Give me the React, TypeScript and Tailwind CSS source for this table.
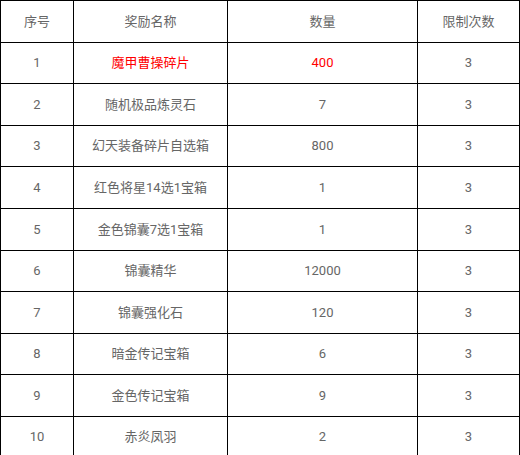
import React from "react";

const rows: [string, string, string, string, boolean][] = [
  ["1", "魔甲曹操碎片", "400", "3", true],
  ["2", "随机极品炼灵石", "7", "3", false],
  ["3", "幻天装备碎片自选箱", "800", "3", false],
  ["4", "红色将星14选1宝箱", "1", "3", false],
  ["5", "金色锦囊7选1宝箱", "1", "3", false],
  ["6", "锦囊精华", "12000", "3", false],
  ["7", "锦囊强化石", "120", "3", false],
  ["8", "暗金传记宝箱", "6", "3", false],
  ["9", "金色传记宝箱", "9", "3", false],
  ["10", "赤炎凤羽", "2", "3", false],
];

export default function App() {
  return (
    <div
      className="w-[520px] h-[455px] overflow-hidden bg-white"
      style={{ fontFamily: 'Roboto, "Noto Sans CJK SC", sans-serif' }}
    >
      <table className="border-collapse w-[519px] table-fixed text-[13px] text-[#666]">
        <colgroup>
          <col className="w-[73px]" />
          <col className="w-[154px]" />
          <col className="w-[190px]" />
          <col className="w-[102px]" />
        </colgroup>
        <thead>
          <tr className="h-[41.6px]">
            {["序号", "奖励名称", "数量", "限制次数"].map((h) => (
              <th key={h} className="border border-black font-normal text-center p-0">
                {h}
              </th>
            ))}
          </tr>
        </thead>
        <tbody>
          {rows.map(([n, name, qty, lim, red]) => (
            <tr key={n} className="h-[41.6px]">
              <td className="border border-black text-center p-0">{n}</td>
              <td className={`border border-black text-center p-0 ${red ? "text-[#ff0000]" : ""}`}>{name}</td>
              <td className={`border border-black text-center p-0 ${red ? "text-[#ff0000]" : ""}`}>{qty}</td>
              <td className="border border-black text-center p-0">{lim}</td>
            </tr>
          ))}
        </tbody>
      </table>
    </div>
  );
}
